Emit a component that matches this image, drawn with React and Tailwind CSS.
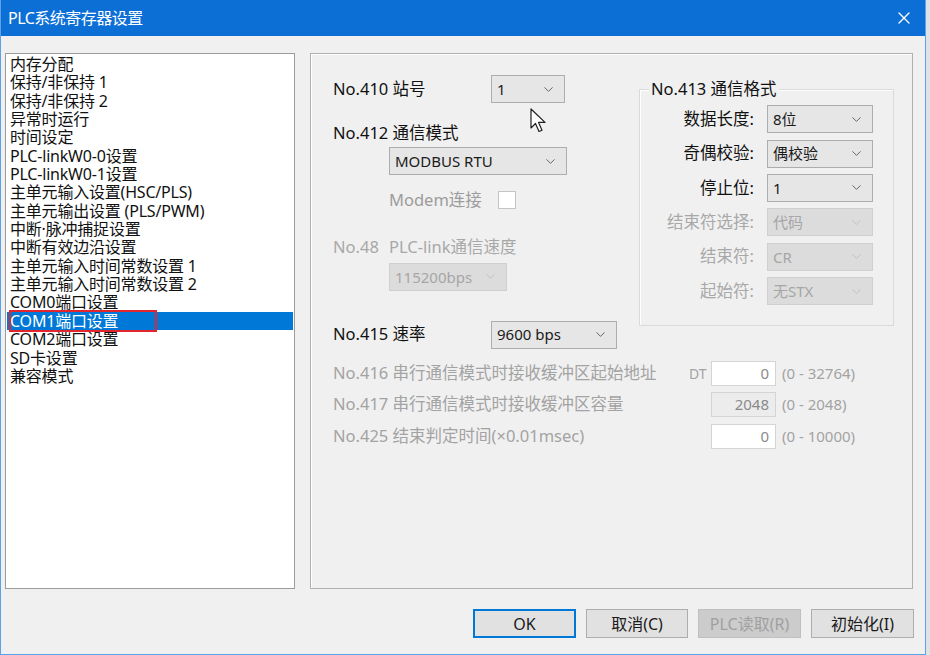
import { ChevronDown, X } from 'lucide-react'

const items = [
  '内存分配',
  '保持/非保持 1',
  '保持/非保持 2',
  '异常时运行',
  '时间设定',
  'PLC-linkW0-0设置',
  'PLC-linkW0-1设置',
  '主单元输入设置(HSC/PLS)',
  '主单元输出设置 (PLS/PWM)',
  '中断·脉冲捕捉设置',
  '中断有效边沿设置',
  '主单元输入时间常数设置 1',
  '主单元输入时间常数设置 2',
  'COM0端口设置',
  'COM1端口设置',
  'COM2端口设置',
  'SD卡设置',
  '兼容模式',
]

const formatRows = [
  { label: '数据长度:', value: '8位' },
  { label: '奇偶校验:', value: '偶校验' },
  { label: '停止位:', value: '1' },
  { label: '结束符选择:', value: '代码', off: true },
  { label: '结束符:', value: 'CR', off: true },
  { label: '起始符:', value: '无STX', off: true },
]

function Select({ value, off, className = '' }) {
  return (
    <div
      className={
        'flex items-center justify-between pl-[5px] pr-[8px] h-[28px] border text-[15px] ' +
        (off
          ? 'bg-[#dcdcdc] border-[#cfcfcf] text-[#a6a6a6] '
          : 'bg-[#e6e6e6] border-[#adadad] text-[#1a1a1a] ') +
        className
      }
    >
      <span>{value}</span>
      <ChevronDown size={15} strokeWidth={1.4} className={off ? 'text-[#bdbdbd]' : 'text-[#555]'} />
    </div>
  )
}

function NumBox({ value, ro }) {
  return (
    <div
      className={
        'w-[65px] h-[25px] border border-[#d4d4d4] flex items-center justify-end pr-[6px] text-[15px] text-[#8a8a8a] ' +
        (ro ? 'bg-[#ececec]' : 'bg-white')
      }
    >
      {value}
    </div>
  )
}

export default function App() {
  return (
    <div className="w-[930px] h-[655px] bg-[#dfe3e8] font-['Noto_Sans','Noto_Sans_CJK_SC',sans-serif] overflow-hidden">
      <div className="w-[926px] h-[655px] flex flex-col border-x border-b border-[#5aa2ec]">
        {/* title bar */}
        <div className="h-[36px] bg-[#0b6fd6] flex items-center justify-between pl-[7px] pr-[11px] shrink-0">
          <span className="text-white text-[16px] tracking-[-0.5px]">PLC系统寄存器设置</span>
          <X size={20} strokeWidth={1.6} className="text-white" />
        </div>

        <div className="flex-1 bg-[#f0f0f0] pl-[4px] pt-[17px] flex flex-col">
          <div className="flex gap-[15px]">
            {/* tree list */}
            <div className="w-[290px] h-[536px] bg-white border border-[#9c9c9c] pt-[1px] px-[1px]">
              <ul className="text-[16px] leading-[18.35px] text-[#111] tracking-[-0.2px]">
                {items.map((t) =>
                  t === 'COM1端口设置' ? (
                    <li key={t} className="relative bg-[#0078d7] text-white pl-[3px]">
                      {t}
                      <span className="absolute left-[2px] top-[-2px] w-[148px] h-[22px] border-2 border-[#e3262e]" />
                    </li>
                  ) : (
                    <li key={t} className="pl-[3px]">
                      {t}
                    </li>
                  )
                )}
              </ul>
            </div>

            {/* settings panel */}
            <div className="relative w-[603px] h-[536px] border border-[#b0b0b0] shadow-[inset_1px_1px_0_#fff] pl-[22px] text-[16.5px] text-[#111]">
              <div className="flex">
                <div className="w-[306px] pt-[21px]">
                  <div className="flex items-center h-[28px]">
                    <span className="w-[158px]">No.410 站号</span>
                    <Select value="1" className="w-[74px]" />
                  </div>
                  <div className="mt-[20px] leading-[20px]">No.412 通信模式</div>
                  <Select value="MODBUS RTU" className="w-[178px] ml-[56px] mt-[4px]" />
                  <div className="flex items-center ml-[56px] mt-[13px] text-[#9c9c9c]">
                    <span className="w-[109px]">Modem连接</span>
                    <span className="w-[18px] h-[18px] bg-white border border-[#c4c4c4]" />
                  </div>
                  <div className="flex mt-[24px] text-[#a8a8a8] leading-[20px]">
                    <span className="w-[56px]">No.48</span>
                    <span>PLC-link通信速度</span>
                  </div>
                  <Select value="115200bps" off className="w-[118px] ml-[56px] mt-[6px]" />
                </div>

                {/* group box */}
                <div className="relative mt-[35px] w-[255px] h-[237px] border border-[#dadada] shadow-[inset_1px_1px_0_#fff]">
                  <span className="absolute left-[9px] top-[-12px] bg-[#f0f0f0] px-[2px] leading-[22px]">
                    No.413 通信格式
                  </span>
                  <div className="pt-[12px]">
                    {formatRows.map((r) => (
                      <div key={r.label} className="flex items-center h-[34.4px]">
                        <span
                          className={
                            'w-[114px] text-right ' + (r.off ? 'text-[#a8a8a8]' : 'text-[#111]')
                          }
                        >
                          {r.label}
                        </span>
                        <Select value={r.value} off={r.off} className="w-[106px] ml-[13px]" />
                      </div>
                    ))}
                  </div>
                </div>
              </div>

              <div className="flex items-center h-[29px] mt-[-6px]">
                <span className="w-[158px]">No.415 速率</span>
                <Select value="9600 bps" className="w-[126px]" />
              </div>

              <div className="mt-[11px] text-[#a3a3a3] flex flex-col gap-[5px]">
                <div className="flex items-center h-[26px]">
                  <span className="w-[356px]">No.416 串行通信模式时接收缓冲区起始地址</span>
                  <span className="w-[22px] text-[14px]">DT</span>
                  <NumBox value="0" />
                  <span className="ml-[6px] text-[15px]">(0 - 32764)</span>
                </div>
                <div className="flex items-center h-[26px]">
                  <span className="w-[378px]">No.417 串行通信模式时接收缓冲区容量</span>
                  <NumBox value="2048" ro />
                  <span className="ml-[6px] text-[15px]">(0 - 2048)</span>
                </div>
                <div className="flex items-center h-[26px] mt-[1px]">
                  <span className="w-[378px]">No.425 结束判定时间(×0.01msec)</span>
                  <NumBox value="0" />
                  <span className="ml-[6px] text-[15px]">(0 - 10000)</span>
                </div>
              </div>

              {/* mouse cursor */}
              <svg className="absolute left-[219px] top-[54px]" width="18" height="26" viewBox="0 0 18 26">
                <path d="M1 1 L1 20 L5.5 15.5 L9 23.5 L12 22.2 L8.6 14.4 L15 14.4 Z" fill="#fff" stroke="#222" strokeWidth="1.2" strokeLinejoin="round" />
              </svg>
            </div>
          </div>

          {/* buttons */}
          <div className="flex justify-end gap-[10px] pr-[11px] mt-[20px] text-[16px]">
            <button className="w-[103px] h-[29px] bg-[#e1e1e1] border-2 border-[#0078d7] text-[#1a1a1a]">OK</button>
            <button className="w-[102px] h-[29px] bg-[#e1e1e1] border border-[#adadad] text-[#1a1a1a]">取消(C)</button>
            <button className="w-[103px] h-[29px] bg-[#cccccc] border border-[#bfbfbf] text-[#a0a0a0]">PLC读取(R)</button>
            <button className="w-[103px] h-[29px] bg-[#e1e1e1] border border-[#adadad] text-[#1a1a1a]">初始化(I)</button>
          </div>
        </div>
      </div>
    </div>
  )
}
